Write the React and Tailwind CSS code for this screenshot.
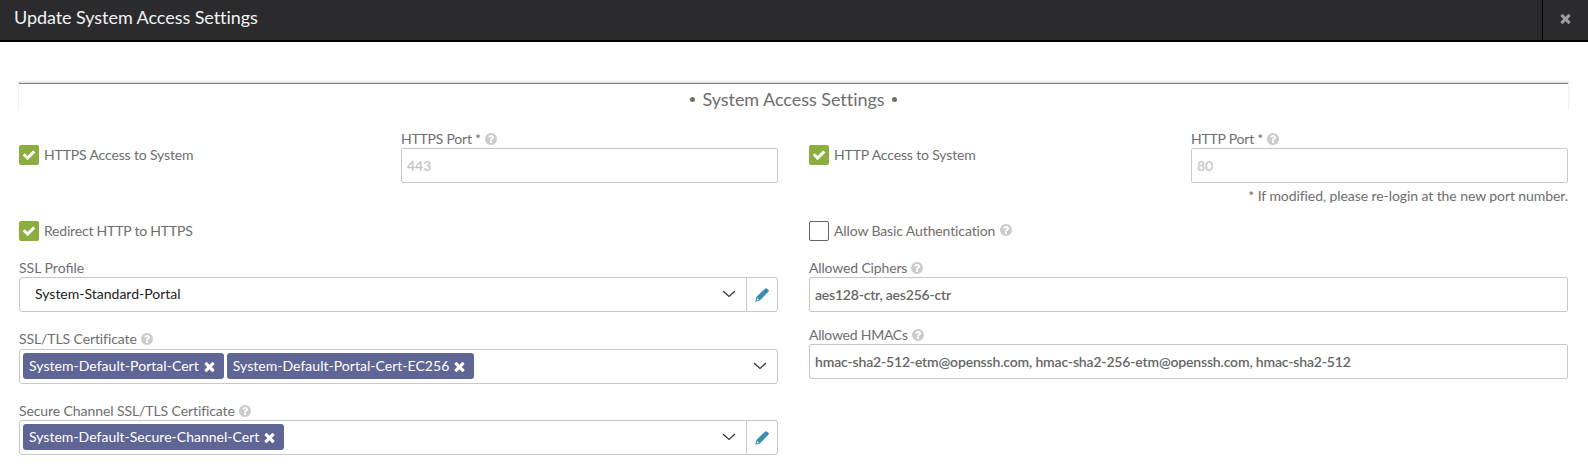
function Icon({ d, className }) {
  return (
    <svg viewBox="0 0 1792 1792" fill="currentColor" className={`shrink-0 ${className}`}>
      <path d={d} />
    </svg>
  );
}

const CHECK =
  "M1671 566q0 40-28 68l-724 724-136 136q-28 28-68 28t-68-28l-136-136-362-362q-28-28-28-68t28-68l136-136q28-28 68-28t68 28l294 295 656-657q28-28 68-28t68 28l136 136q28 28 28 68z";
const TIMES =
  "M1490 1322q0 40-28 68l-136 136q-28 28-68 28t-68-28l-294-294-294 294q-28 28-68 28t-68-28l-136-136q-28-28-28-68t28-68l294-294-294-294q-28-28-28-68t28-68l136-136q28-28 68-28t68 28l294 294 294-294q28-28 68-28t68 28l136 136q28 28 28 68t-28 68l-294 294 294 294q28 28 28 68z";
const QUESTION =
  "M1024 1376v-192q0-14-9-23t-23-9h-192q-14 0-23 9t-9 23v192q0 14 9 23t23 9h192q14 0 23-9t9-23zm256-672q0-88-55.5-163t-138.5-116-170-41q-243 0-371 213-15 24 8 42l132 100q7 6 19 6 16 0 25-12 53-68 86-92 34-24 86-24 48 0 85.5 26t37.5 59q0 38-20 61t-68 45q-63 28-115.5 86.5t-52.5 125.5v36q0 14 9 23t23 9h192q14 0 23-9t9-23q0-19 21.5-49.5t54.500-49.500q32-18 49-28.500t46-35 44.500-48 28-60.500 12.500-81zm384 192q0 209-103 385.500t-279.500 279.500-385.500 103-385.500-103-279.500-279.500-103-385.500 103-385.500 279.500-279.500 385.500-103 385.500 103 279.500 279.500 103 385.500z";

function Help({ className = "" }) {
  return <Icon d={QUESTION} className={`size-[14px] text-[#ccc] ${className}`} />;
}

function Label({ children, help, track = "", className = "h-5" }) {
  return (
    <div className={`flex items-center gap-[3px] leading-5 whitespace-nowrap ${className}`}>
      <span className={track}>{children}</span>
      {help && <Help />}
    </div>
  );
}

function Checkbox({ checked, children, track, help }) {
  return (
    <div className="flex h-5 items-center">
      <span
        className={
          checked
            ? "flex size-5 shrink-0 items-center justify-center rounded-[2px] bg-[#8cad3f]"
            : "size-5 shrink-0 rounded-[2px] border border-[#666]"
        }
      >
        {checked && <Icon d={CHECK} className="size-[14px] text-white" />}
      </span>
      <span className={`ml-[5px] leading-5 whitespace-nowrap ${track}`}>{children}</span>
      {help && <Help className="mb-[2px] ml-1" />}
    </div>
  );
}

function Input({ children, className }) {
  return (
    <div className={`flex h-[35px] items-center rounded-[2px] border border-[#c8c8c8] pl-[5px] font-semibold whitespace-nowrap ${className}`}>
      {children}
    </div>
  );
}

function Chevron() {
  return (
    <svg viewBox="0 0 14 8" className="h-2 w-[14px]" fill="none" stroke="#333" strokeWidth="1.2">
      <path d="M1 1l6 5.500L13 1" />
    </svg>
  );
}

function Pencil() {
  return (
    <svg viewBox="0 0 14 14" className="size-[14px]">
      <path
        fill="#3b8eb0"
        fillRule="evenodd"
        d="M9.200 1.400L10.400.4q.7-.5 1.400 0l1.800 1.600q.5.700 0 1.400L4.900 12.500.3 13.700 1.400 9.100zM2.300 10.200L1.600 12.400 3.900 11.700z"
      />
    </svg>
  );
}

function Select({ children, edit }) {
  return (
    <div className="flex h-[35px] items-stretch rounded-[3px] border border-[#c8c8c8]">
      <div className="flex flex-1 items-center gap-[3px] pl-[3px]">{children}</div>
      <div className="flex w-6 items-center pb-px">
        <Chevron />
      </div>
      {edit && (
        <div className="flex w-[31px] items-center justify-center border-l border-[#c8c8c8]">
          <Pencil />
        </div>
      )}
    </div>
  );
}

function Tag({ children, track }) {
  return (
    <div className="mb-px flex h-[26px] items-center rounded-[3px] bg-[#5f6695] pr-[7px] pl-[6px] text-white">
      <span className={`pb-[2px] whitespace-nowrap ${track}`}>{children}</span>
      <Icon d={TIMES} className="ml-[3px] size-[15px]" />
    </div>
  );
}

export default function App() {
  return (
    <div className="h-[472px] w-full overflow-hidden bg-white font-['Lato',sans-serif] text-[14px] text-[#6e6e6e]">
      <header className="flex h-[42px] border-b-2 border-black bg-[#2b2b2d]">
        <h1 className="flex-1 pt-[5px] pl-[14px] text-[18px] leading-6 tracking-[-0.06px] text-[#f2f2f2]">
          Update System Access Settings
        </h1>
        <button className="flex w-[46px] justify-center border-l border-black pt-[11px] text-[#9a9a9f]">
          <Icon d={TIMES} className="size-[15px]" />
        </button>
      </header>

      <main className="px-[19px] pr-5 pt-[41px]">
        <div className="relative flex h-[27px] justify-center">
          <div className="absolute -inset-x-px -top-[3px] h-[3px] bg-linear-to-t from-black/15 to-transparent" />
          <div className="absolute -inset-x-px inset-y-0 border-x border-[#f1f1f1]" />
          <div className="absolute inset-x-0 top-0 h-px bg-[#808080]" />
          <h2 className="relative flex items-center gap-[7px] pt-[5px] text-[18px] leading-6">
            <span className="mt-px size-[5px] rounded-full bg-[#6e6e6e]" />
            <span className="tracking-[-0.04px]">System Access Settings</span>
            <span className="mt-px size-[5px] rounded-full bg-[#6e6e6e]" />
          </h2>
        </div>

        <div className="grid grid-cols-2 gap-x-[31px]">
          <section className="flex flex-col">
            <div className="flex h-[111px] justify-between pt-[19px]">
              <div className="pt-4">
                <Checkbox checked track="tracking-[-0.15px]">HTTPS Access to System</Checkbox>
              </div>
              <div className="w-[377px]">
                <Label help track="tracking-[-0.22px]" className="h-[19px] pt-px">HTTPS Port *</Label>
                <Input className="text-[#c6c6c6]">443</Input>
              </div>
            </div>
            <Checkbox checked track="tracking-[-0.2px]">Redirect HTTP to HTTPS</Checkbox>
            <div className="mt-[17px]">
              <Label className="h-[19px]">SSL Profile</Label>
              <Select edit>
                <span className="pb-[2px] pl-3 text-[#222]">System-Standard-Portal</span>
              </Select>
            </div>
            <div className="mt-[17px]">
              <Label help track="tracking-[-0.1px]">SSL/TLS Certificate</Label>
              <Select>
                <Tag track="tracking-[0.04px]">System-Default-Portal-Cert</Tag>
                <Tag track="tracking-[0.03px]">System-Default-Portal-Cert-EC256</Tag>
              </Select>
            </div>
            <div className="mt-[17px]">
              <Label help track="tracking-[-0.09px]" className="h-[19px]">Secure Channel SSL/TLS Certificate</Label>
              <Select edit>
                <Tag track="tracking-[0.02px]">System-Default-Secure-Channel-Cert</Tag>
              </Select>
            </div>
          </section>

          <section className="flex flex-col">
            <div className="flex h-[111px] justify-between pt-[19px]">
              <div className="pt-4">
                <Checkbox checked track="tracking-[-0.14px]">HTTP Access to System</Checkbox>
              </div>
              <div className="w-[377px]">
                <Label help track="tracking-[-0.22px]" className="h-[19px] pt-px">HTTP Port *</Label>
                <Input className="text-[#c6c6c6]">80</Input>
                <p className="pt-[3px] text-right leading-5 tracking-[-0.08px] whitespace-nowrap">
                  * If modified, please re-login at the new port number.
                </p>
              </div>
            </div>
            <Checkbox help track="tracking-[-0.12px]">Allow Basic Authentication</Checkbox>
            <div className="mt-[17px]">
              <Label help track="tracking-[-0.15px]" className="h-[19px]">Allowed Ciphers</Label>
              <Input className="tracking-[-0.21px] text-[#666]">aes128-ctr, aes256-ctr</Input>
            </div>
            <div className="mt-[13px]">
              <Label help track="tracking-[-0.24px]" className="h-[19px]">Allowed HMACs</Label>
              <Input className="tracking-[-0.17px] text-[#666]">
                hmac-sha2-512-etm@openssh.com, hmac-sha2-256-etm@openssh.com, hmac-sha2-512
              </Input>
            </div>
          </section>
        </div>
      </main>
    </div>
  );
}
